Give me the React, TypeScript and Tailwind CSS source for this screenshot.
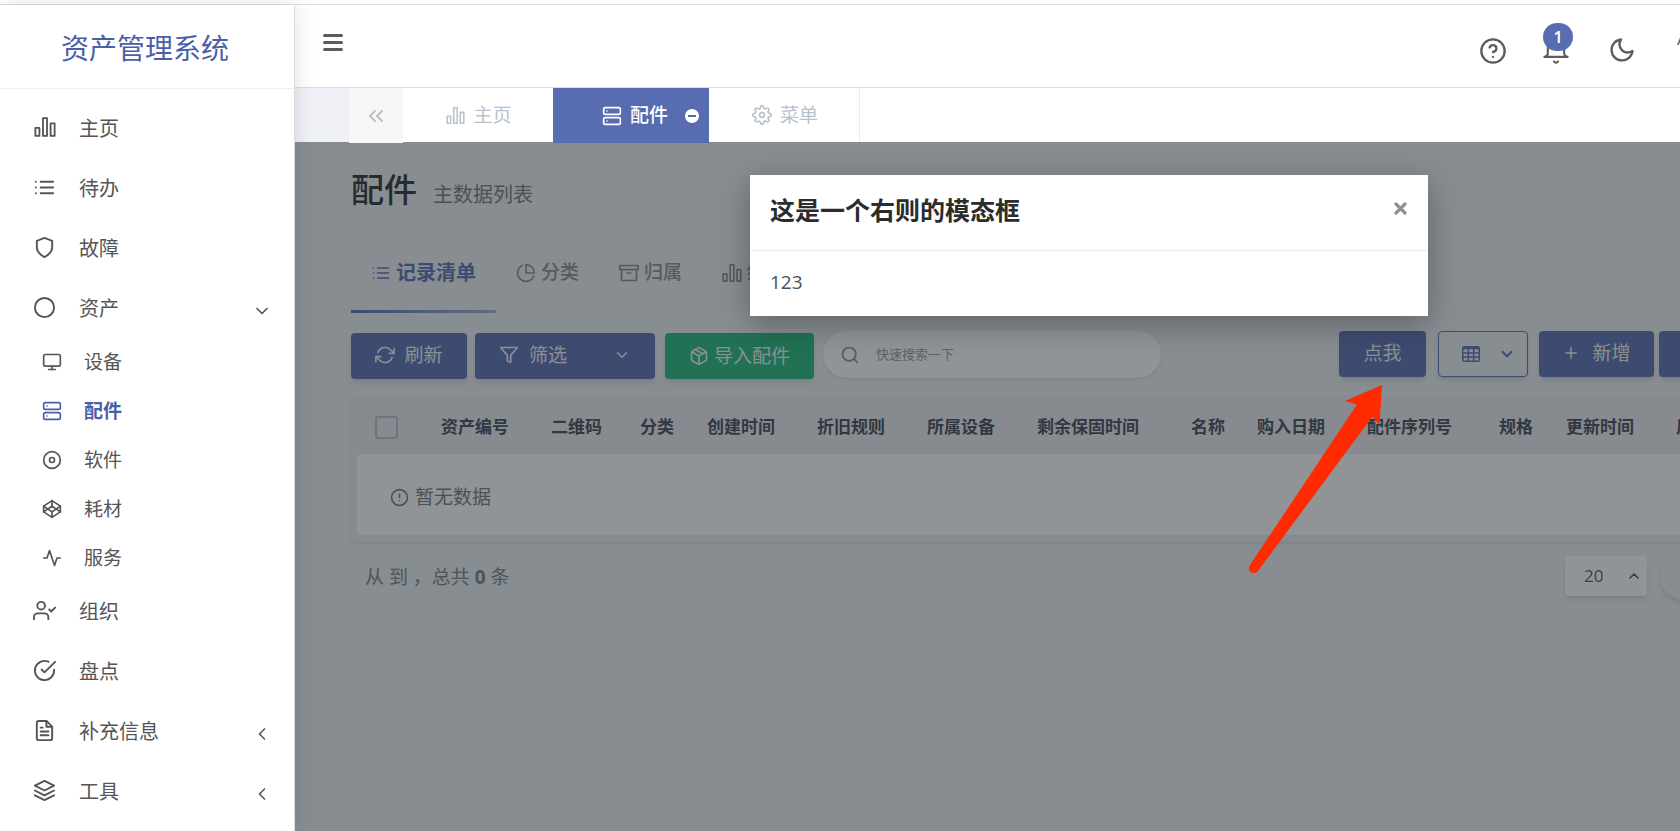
import type { ReactNode } from "react";
import {
  FiActivity,
  FiAlertCircle,
  FiArchive,
  FiChevronDown,
  FiChevronLeft,
  FiChevronsLeft,
  FiChevronUp,
  FiCircle,
  FiCodepen,
  FiDisc,
  FiFileText,
  FiFilter,
  FiHelpCircle,
  FiLayers,
  FiList,
  FiMonitor,
  FiMoon,
  FiPackage,
  FiPieChart,
  FiPlus,
  FiRefreshCw,
  FiSearch,
  FiServer,
  FiSettings,
  FiShield,
  FiUserCheck,
} from "react-icons/fi";

function BarsIcon({ size = 24 }: { size?: number }) {
  return (
    <svg width={size} height={size} viewBox="0 0 24 24" fill="none" stroke="currentColor" strokeWidth="2" strokeLinejoin="round">
      <path d="M1.5 13h4.4v8.7H1.500zM9.8 2.300h4.400v19.400H9.800zM18.100 8h4.400v13.700h-4.400z" />
    </svg>
  );
}

function TableIcon() {
  return (
    <svg width="18" height="16" viewBox="0 0 18 16" fill="none" stroke="currentColor" strokeWidth="1.5">
      <rect x="0.75" y="0.75" width="16.5" height="14.5" rx="1.5" />
      <path d="M1 2h16" strokeWidth="2.5" />
      <path d="M1 7h16M1 11h16M6.3 3v12M11.7 3v12" />
    </svg>
  );
}

function CheckCircleIcon() {
  return (
    <svg width="23" height="23" viewBox="0 0 24 24" fill="none" stroke="currentColor" strokeWidth="2" strokeLinecap="round" strokeLinejoin="round" className="overflow-visible">
      <path d="M22 11.07V12a10 10 0 1 1-5.93-9.14" />
      <path d="M23 3L12 14l-3-3" />
    </svg>
  );
}

function BellIcon() {
  return (
    <svg width="28" height="28" viewBox="0 0 24 24" fill="none" stroke="currentColor" strokeWidth="1.8" strokeLinecap="round" strokeLinejoin="round">
      <path d="M22 17H2a3 3 0 0 0 3-3V9a7 7 0 0 1 14 0v5a3 3 0 0 0 3 3zM13.73 21a2 2 0 0 1-3.46 0" />
    </svg>
  );
}

const menu = [
  { label: "主页", icon: <BarsIcon size={22} /> },
  { label: "待办", icon: <FiList size={23} /> },
  { label: "故障", icon: <FiShield size={23} /> },
  { label: "资产", icon: <FiCircle size={23} />, open: true },
  { label: "组织", icon: <FiUserCheck size={23} /> },
  { label: "盘点", icon: <CheckCircleIcon /> },
  { label: "补充信息", icon: <FiFileText size={23} />, open: false },
  { label: "工具", icon: <FiLayers size={23} />, open: false },
];

const assets = [
  { label: "设备", icon: <FiMonitor size={20} /> },
  { label: "配件", icon: <FiServer size={20} />, active: true },
  { label: "软件", icon: <FiDisc size={20} /> },
  { label: "耗材", icon: <FiCodepen size={20} /> },
  { label: "服务", icon: <FiActivity size={20} /> },
];

const columns = [
  { label: "资产编号", width: 110 },
  { label: "二维码", width: 89 },
  { label: "分类", width: 67 },
  { label: "创建时间", width: 110 },
  { label: "折旧规则", width: 110 },
  { label: "所属设备", width: 110 },
  { label: "剩余保固时间", width: 154 },
  { label: "名称", width: 66 },
  { label: "购入日期", width: 110 },
  { label: "配件序列号", width: 132 },
  { label: "规格", width: 67 },
  { label: "更新时间", width: 110 },
];

function Sidebar() {
  return (
    <aside className="relative z-20 w-[295px] shrink-0 border-r border-[#dcdcdc] bg-white shadow-[0_0_20px_rgba(34,41,47,0.14)]">
      <div className="flex h-[84px] items-center justify-center border-b border-[#eeeeee] pr-1 pt-[3px] text-[28px] text-[#4a5fa8]">
        <a href="#home">资产管理系统</a>
      </div>
      <ul className="pt-[10px]">
        {menu.map((item) => (
          <li key={item.label}>
            <a href={`#${item.label}`} className="flex h-[60px] items-center pl-[33px] pr-[22px] text-[20px] text-[#555555]">
              <span className="flex w-[23px] justify-center pb-1">{item.icon}</span>
              <span className="ml-[23px] flex-1">{item.label}</span>
              {item.open === true && <FiChevronDown size={20} className="mt-1" />}
              {item.open === false && <FiChevronLeft size={20} className="mt-1" />}
            </a>
            {item.open && (
              <ul className="-my-px">
                {assets.map((sub) => (
                  <li key={sub.label}>
                    <a
                      href={`#${sub.label}`}
                      className={`flex h-[49px] items-center gap-[22px] pl-[42px] text-[19px] ${
                        sub.active ? "font-bold text-[#4a5fa8]" : "text-[#555555]"
                      }`}
                    >
                      <span className="pb-[2px]">{sub.icon}</span>
                      {sub.label}
                    </a>
                  </li>
                ))}
              </ul>
            )}
          </li>
        ))}
      </ul>
    </aside>
  );
}

function Header() {
  return (
    <header className="flex h-[83px] items-start overflow-hidden border-b border-[#dedede] bg-white text-[#5c5c5c]">
      <button aria-label="菜单" className="ml-[28px] mt-[29px] flex w-5 flex-col gap-1">
        <span className="h-[3px] w-full rounded-sm bg-[#5c5c5c]" />
        <span className="h-[3px] w-full rounded-sm bg-[#5c5c5c]" />
        <span className="h-[3px] w-full rounded-sm bg-[#5c5c5c]" />
      </button>
      <div className="ml-auto flex items-start">
        <button aria-label="帮助" className="mt-8">
          <FiHelpCircle size={28} />
        </button>
        <button aria-label="通知" className="relative ml-[35px] mt-8">
          <BellIcon />
          <span className="absolute -top-[14px] left-px flex h-7 w-[30px] items-center justify-center rounded-full bg-[#586cb1] text-[17px] font-semibold text-white">
            1
          </span>
        </button>
        <button aria-label="夜间模式" className="ml-[38px] mt-[31px]">
          <FiMoon size={28} />
        </button>
        <span className="ml-[41px] mt-[19px] w-[3px] overflow-hidden whitespace-nowrap text-[19px] leading-7">Admin</span>
      </div>
    </header>
  );
}

function PageTabs() {
  return (
    <nav className="relative z-10 flex h-[54px] bg-white text-[19px] text-[#b8c2cc]">
      <div className="w-[54px] bg-[#eff1f7]" />
      <button aria-label="向左" className="flex h-[55px] w-[54px] items-center justify-center bg-[#f7f7f7] text-[#c0c0c0]">
        <FiChevronsLeft size={24} />
      </button>
      <a href="#home" className="flex w-[150px] items-center justify-center gap-2 pl-[2px]">
        <BarsIcon size={19} />
        主页
      </a>
      <a href="#parts" className="flex h-[55px] w-[156px] items-center justify-end bg-[#586cb1] pr-[10px] font-medium text-white">
        <FiServer size={20} />
        <span className="ml-2 mr-[17px]">配件</span>
        <svg width="14" height="14" viewBox="0 0 14 14">
          <circle cx="7" cy="7" r="7" fill="#fff" />
          <path d="M3 7h8" stroke="#586cb1" strokeWidth="2" />
        </svg>
      </a>
      <a href="#menu" className="flex h-[54px] w-[151px] items-center justify-center gap-2 border-r border-[#ececec] pl-[2px]">
        <FiSettings size={20} />
        菜单
      </a>
    </nav>
  );
}

function SubTab({ icon, label, active }: { icon: ReactNode; label: string; active?: boolean }) {
  return (
    <a
      href={`#${label}`}
      className={`flex h-[81px] items-center gap-[5px] whitespace-nowrap px-5 ${
        active
          ? "relative text-[20px] font-bold text-[#586cb1] after:absolute after:inset-x-0 after:bottom-0 after:h-[3px] after:bg-linear-to-r after:from-[#586cb1] after:to-[#a3afd8]"
          : "text-[19px] font-medium text-[#8a8a8a]"
      }`}
    >
      {icon}
      {label}
    </a>
  );
}

const primary = "flex h-[46px] shrink-0 items-center rounded bg-[#586cb1] text-[19px] text-[#f4f4f4] shadow-md";

function Toolbar() {
  return (
    <div className="-mr-8 mt-[18px] flex items-start">
      <button className={`${primary} mt-[2px] w-[116px] justify-center gap-[9px] pb-[2px]`}>
        <FiRefreshCw size={20} />
        刷新
      </button>
      <button className={`${primary} ml-2 mt-[2px] w-[180px] gap-[10px] pb-[2px] pl-6 pr-6`}>
        <FiFilter size={20} />
        筛选
        <FiChevronDown size={18} className="ml-auto" />
      </button>
      <button className="ml-[10px] mt-[2px] flex h-[46px] w-[149px] items-center justify-center gap-[5px] rounded bg-[#21b978] text-[19px] text-[#f4f4f4] shadow-md">
        <FiPackage size={20} />
        导入配件
      </button>
      <label className="ml-[9px] flex h-[47px] w-[338px] items-center gap-4 rounded-full bg-white pl-[17px] text-[#8a8a8a] shadow-sm">
        <FiSearch size={20} />
        <input aria-label="快速搜索" placeholder="快速搜索一下" className="w-[240px] bg-transparent text-[13px] outline-none placeholder:text-[#9a9a9a]" />
      </label>
      <button className={`${primary} ml-auto w-[87px] justify-center pb-[2px]`}>点我</button>
      <button aria-label="表格列" className="ml-3 flex h-[46px] w-[90px] items-center justify-center gap-[18px] rounded border border-[#586cb1] pl-3 text-[#586cb1] shadow-md">
        <TableIcon />
        <FiChevronDown size={18} strokeWidth={2.5} />
      </button>
      <button className={`${primary} ml-[11px] w-[115px] justify-center gap-3 pb-[2px]`}>
        <FiPlus size={18} />
        新增
      </button>
      <button aria-label="更多" className={`${primary} ml-[5px] w-[53px]`} />
    </div>
  );
}

function RecordTable() {
  return (
    <div className="-mr-8 mt-[18px] rounded bg-[#ececf0] px-[6px] pb-[7px] shadow-sm">
      <table className="w-full table-fixed border-separate border-spacing-0 text-left">
        <colgroup>
          <col className="w-[84px]" />
          {columns.map((column) => (
            <col key={column.label} style={{ width: column.width }} />
          ))}
          <col />
        </colgroup>
        <thead>
          <tr className="h-[57px] text-[17px] text-[#414750]">
            <th className="pl-[18px]">
              <input
                type="checkbox"
                aria-label="全选"
                className="mt-1 block size-[23px] appearance-none rounded-[3px] border-2 border-[#b9c3cd]"
              />
            </th>
            {columns.map((column) => (
              <th key={column.label} className="whitespace-nowrap pt-[3px] font-bold">
                {column.label}
              </th>
            ))}
            <th className="whitespace-nowrap pt-[3px] font-bold">厂商</th>
          </tr>
        </thead>
        <tbody>
          <tr>
            <td colSpan={14} className="h-[81px] rounded bg-white pl-[33px] pt-[6px] text-[19px] text-[#777777]">
              <span className="flex items-center gap-[6px]">
                <FiAlertCircle size={19} />
                暂无数据
              </span>
            </td>
          </tr>
        </tbody>
      </table>
    </div>
  );
}

function Modal() {
  return (
    <section
      role="dialog"
      aria-labelledby="modal-title"
      className="absolute left-[455px] top-[33px] w-[678px] bg-white shadow-[0_8px_30px_rgba(0,0,0,0.3)]"
    >
      <div className="flex h-[76px] items-center justify-between border-b border-[#ececec] px-5">
        <h2 id="modal-title" className="pb-1 text-[25px] font-bold text-[#2c2c2c]">
          这是一个右则的模态框
        </h2>
        <button aria-label="关闭" className="mb-2 mr-px text-[#8d9196]">
          <svg width="13" height="13" viewBox="0 0 13 13" stroke="currentColor" strokeWidth="3.2" strokeLinecap="round">
            <path d="M2 2l9 9M11 2l-9 9" />
          </svg>
        </button>
      </div>
      <p className="flex h-[65px] items-center px-5 pb-[2px] text-[19px] text-[#475058]">123</p>
    </section>
  );
}

export default function App() {
  return (
    <div className="h-screen overflow-hidden bg-white pt-1 font-['Open_Sans','Noto_Sans_CJK_SC',sans-serif]">
      <div className="flex h-full border-t border-[#dedede]">
        <Sidebar />
        <div className="flex min-w-0 flex-1 flex-col">
          <Header />
          <PageTabs />
          <main className="relative flex-1 overflow-hidden bg-[#edf0f3] pl-[56px]">
            <div className="flex items-baseline gap-4 pt-[25px]">
              <h1 className="text-[33px] font-medium leading-[46px] text-[#2c2c2c]">配件</h1>
              <span className="text-[20px] text-[#777777]">主数据列表</span>
            </div>
            <div className="mt-[19px] flex">
              <SubTab icon={<FiList size={20} />} label="记录清单" active />
              <SubTab icon={<FiPieChart size={20} />} label="分类" />
              <SubTab icon={<FiArchive size={20} />} label="归属" />
              <SubTab icon={<BarsIcon size={20} />} label="统计" />
            </div>
            <Toolbar />
            <RecordTable />
            <div className="-mr-8 mt-[10px] flex items-center text-[19px] text-[#7c7f84]">
              <p className="pl-[14px] pt-[2px]">
                从 到 ，总共 <b>0</b> 条
              </p>
              <button className="ml-auto flex h-10 w-[82px] items-center justify-between rounded bg-white pl-[19px] pr-[5px] text-[17px] text-[#55585c] shadow-md">
                20
                <FiChevronUp size={16} strokeWidth={2.5} />
              </button>
              <span className="ml-[13px] h-12 w-[52px] rounded-l-full bg-[#f0f1f4] shadow-md" />
            </div>

            <div className="absolute inset-0 bg-[#22292f]/50" />
            <Modal />
            <svg className="absolute left-[953px] top-[243px]" width="136" height="190" viewBox="0 0 136 190" fill="#ff2a00">
              <path d="M134 0L97 16l12 3.5L2 180c-4 6 4 11 8 6L124.5 31.5L131.5 40z" />
            </svg>
          </main>
        </div>
      </div>
    </div>
  );
}
